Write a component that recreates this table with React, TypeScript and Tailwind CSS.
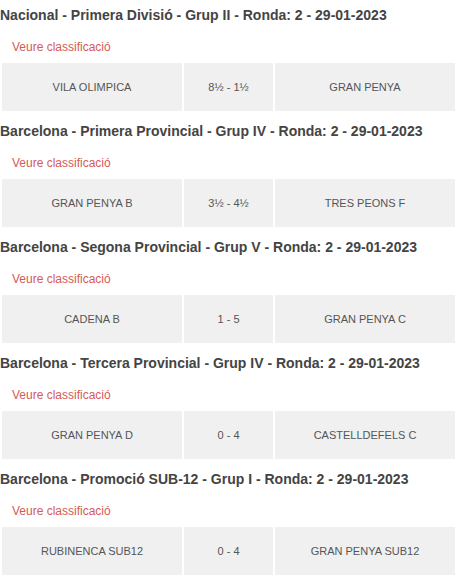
const matches = [
  {
    title: "Nacional - Primera Divisió - Grup II - Ronda: 2 - 29-01-2023",
    home: "VILA OLIMPICA",
    score: "8½ - 1½",
    away: "GRAN PENYA",
  },
  {
    title: "Barcelona - Primera Provincial - Grup IV - Ronda: 2 - 29-01-2023",
    home: "GRAN PENYA B",
    score: "3½ - 4½",
    away: "TRES PEONS F",
  },
  {
    title: "Barcelona - Segona Provincial - Grup V - Ronda: 2 - 29-01-2023",
    home: "CADENA B",
    score: "1 - 5",
    away: "GRAN PENYA C",
  },
  {
    title: "Barcelona - Tercera Provincial - Grup IV - Ronda: 2 - 29-01-2023",
    home: "GRAN PENYA D",
    score: "0 - 4",
    away: "CASTELLDEFELS C",
  },
  {
    title: "Barcelona - Promoció SUB-12 - Grup I - Ronda: 2 - 29-01-2023",
    home: "RUBINENCA SUB12",
    score: "0 - 4",
    away: "GRAN PENYA SUB12",
  },
];

type MatchProps = {
  title: string;
  home: string;
  score: string;
  away: string;
};

const MatchBlock = ({ title, home, score, away }: MatchProps) => {
  return (
    <div className="flex flex-col mb-[5px]">
      <h3 className="h-[30px] flex items-center text-[14px] font-bold text-[#444] whitespace-nowrap">
        {title}
      </h3>
      <div className="h-[33px] flex items-center pl-[12px]">
        <a href="#" className="text-[12px] text-[#d65a57]">
          Veure classificació
        </a>
      </div>
      <div className="flex h-[48px] gap-[2px] pl-[2px] text-[11px] text-[#555]">
        <div className="w-[180px] bg-[#f0f0f0] flex items-center justify-center">{home}</div>
        <div className="w-[89px] bg-[#f0f0f0] flex items-center justify-center">{score}</div>
        <div className="flex-1 bg-[#f0f0f0] flex items-center justify-center">{away}</div>
      </div>
    </div>
  );
};

export default function App() {
  return (
    <div className="w-[455px] bg-white font-['Liberation_Sans',Arial,sans-serif]">
      {matches.map((m) => (
        <MatchBlock key={m.title} {...m} />
      ))}
    </div>
  );
}
